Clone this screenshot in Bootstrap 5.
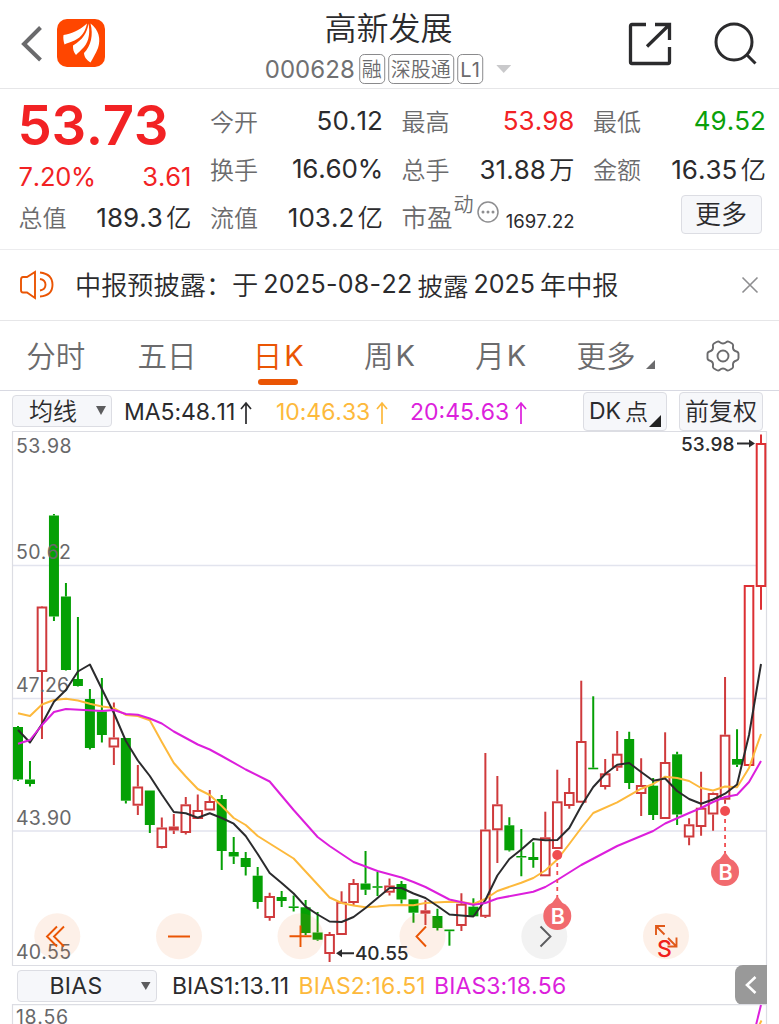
<!DOCTYPE html>
<html lang="zh-CN">
<head>
<meta charset="utf-8">
<meta name="viewport" content="width=device-width, initial-scale=1">
<title>高新发展 000628</title>
<link href="https://cdn.jsdelivr.net/npm/bootstrap@5.3.0/dist/css/bootstrap.min.css" rel="stylesheet">
<style>
body{font-family:Inter,"Noto Sans CJK SC",sans-serif;font-weight:400;color:#2b2b2d;background:#fff;overflow:hidden;line-height:1;height:1024px;font-kerning:none}
body *{white-space:nowrap}
.zh{font-family:"Noto Sans CJK SC",sans-serif;font-weight:350}
svg{display:block;flex:none}
.topbar{height:89px;border-bottom:1px solid #e6e6e8;padding:0 22px 0 20px}
.stock-name{font-size:32px;line-height:36px;font-weight:350}
.stock-code{font-size:24px;letter-spacing:.05px;color:#707072;margin-right:1px;padding-top:1px}
.tag{height:30px;border:1px solid #8a8a8c;border-radius:5px;font-size:20px;line-height:27px;color:#6b6b6d;padding:0 2px}
.quote{height:161px;border-bottom:1px solid #ececee;display:grid;grid-template-columns:173px 173px 173px 173px;column-gap:18.5px;padding:8px 0 0 18.5px}
.cell{height:48px;font-size:26px}
.cell .zh{font-size:24px;color:#6b6b6d}
.cell b{font-weight:400;letter-spacing:.05px}
.cell b .zh{color:#2b2b2d;font-size:25.5px;margin-left:3px}
.rise{color:#f22224}.fall{color:#0aa00a}
.last-price{font-size:54.5px;font-weight:600;height:56px;line-height:56px;letter-spacing:-.4px;margin-left:-1px}
.pill{background:#f6f7fa;border:1px solid #dcdde3;border-radius:4px}
.notice{height:71px;border-bottom:1px solid #e6e6e8;font-size:25px;padding:0 20px 0 20px}
.notice .zh{font-size:26.2px;margin-top:-1px}
.tabs{height:70px;border-bottom:1px solid #d8d9e2;font-size:29px;color:#6b6b6d}
.tabs .zh{font-size:29.5px;margin-top:-2px}
.tabs>div{width:14.2857%;position:relative}
.tabs .on{color:#ea5504}
.tabs .on::after{content:"";position:absolute;left:calc(50% - 20px);bottom:5px;width:40px;height:6px;border-radius:3px;background:#ea5504}
.tools{height:40px;padding:0 16px 0 12px;font-size:23px}
.tools>span{padding-top:3px}
.ma10{color:#fdb93c}.ma20{color:#dc1fdc}
.bias{height:39px;padding-left:16.5px;font-size:23px}
.bias>span{padding-top:3px}
.drawer-handle{width:32px;height:40px;border-radius:8px 0 0 8px;background:#999;margin:0 12px 0 auto}
.axis{font-size:19.5px;fill:#68686a}
</style>
</head>
<body>
<header class="topbar d-flex justify-content-between position-relative">
  <div class="d-flex align-items-start">
    <svg width="24" height="40" viewBox="0 0 24 40" style="margin-top:24px"><path d="M20.5 3.500L4 20L20.500 36" fill="none" stroke="#6a6a6c" stroke-width="4"/></svg>
    <svg width="48" height="48" viewBox="0 0 48 48" style="margin:19px 0 0 12.500px"><rect width="48" height="48" rx="10" fill="#ff4600"/><path d="M6.500 16C14 14.500 22 12 30 4.500C28.500 12 25 18 17.500 21.500C13 23.300 10 24.300 7.500 25.500C6.500 22 6 19 6.500 16ZM31.500 4.500C33 12 32.500 22 27 28C24 31 21 34 19 36C16.500 33 15.800 30 16 26.500C26 20.500 30 14 31.500 4.500ZM33.500 4.500C42 11 44 20 41 29C38.500 35 36 39 33.500 43.500C29.500 41 27 37.500 27 34C34 27 36.500 16 33.500 4.500Z" fill="#fff"/></svg>
  </div>
  <div class="position-absolute start-50 translate-middle-x d-flex flex-column align-items-center" style="top:8px">
    <div class="zh stock-name" style="margin-left:-2px">高新发展</div>
    <div class="d-flex align-items-center" style="margin-top:10px;gap:3px;height:30px;padding-right:3px">
      <span class="stock-code">000628</span><span class="tag zh">融</span><span class="tag zh">深股通</span><span class="tag" style="padding:2px 2.500px 0">L1</span>
      <svg width="15" height="8" style="margin-left:10px" viewBox="0 0 15 8"><path d="M0 0H15L7.500 8Z" fill="#c9c9cb"/></svg>
    </div>
  </div>
  <div class="d-flex" style="padding-top:22px;gap:42px">
    <svg width="44" height="44" viewBox="0 0 44 44" fill="none" stroke="#2b2b2d" stroke-width="3.300"><path d="M18 2.500H4Q2.500 2.500 2.500 4V40Q2.500 41.500 4 41.500H40Q41.500 41.500 41.500 40V25M27 2.500H41.500V18M41 3L19 24.500"/></svg>
    <svg width="43" height="43" viewBox="0 0 43 43" fill="none" stroke="#2b2b2d" stroke-width="3"><circle cx="20" cy="20" r="18"/><path d="M33 33L41.500 41.500"/></svg>
  </div>
</header>

<section class="quote">
  <div>
    <div class="last-price rise">53.73</div>
    <div class="d-flex justify-content-between align-items-center rise" style="height:48px;font-size:25.500px"><span style="letter-spacing:-.2px">7.20%</span><span>3.61</span></div>
    <div class="cell d-flex justify-content-between align-items-center" style="margin-top:-8px"><span class="zh">总值</span><b>189.3<span class="zh">亿</span></b></div>
  </div>
  <div>
    <div class="cell d-flex justify-content-between align-items-center"><span class="zh">今开</span><b>50.12</b></div>
    <div class="cell d-flex justify-content-between align-items-center"><span class="zh">换手</span><b style="letter-spacing:-.2px">16.60%</b></div>
    <div class="cell d-flex justify-content-between align-items-center"><span class="zh">流值</span><b>103.2<span class="zh">亿</span></b></div>
  </div>
  <div>
    <div class="cell d-flex justify-content-between align-items-center"><span class="zh">最高</span><b class="rise">53.98</b></div>
    <div class="cell d-flex justify-content-between align-items-center"><span class="zh">总手</span><b>31.88<span class="zh">万</span></b></div>
    <div class="cell d-flex align-items-center"><span class="zh" style="font-size:25.500px;margin-top:-2px">市盈</span><span class="zh" style="font-size:20px;margin:-26px 3px 0 1px">动</span>
      <svg width="22" height="22" viewBox="0 0 22 22" style="margin-top:-10px"><circle cx="11" cy="11" r="10" fill="none" stroke="#8e8e90" stroke-width="1.500"/><g fill="#8e8e90"><circle cx="6" cy="11" r="1.500"/><circle cx="11" cy="11" r="1.500"/><circle cx="16" cy="11" r="1.500"/></g></svg>
      <span class="ms-auto" style="font-size:18.500px;padding-top:8px">1697.22</span></div>
  </div>
  <div>
    <div class="cell d-flex justify-content-between align-items-center"><span class="zh">最低</span><b class="fall">49.52</b></div>
    <div class="cell d-flex justify-content-between align-items-center"><span class="zh">金额</span><b>16.35<span class="zh">亿</span></b></div>
    <div class="d-flex justify-content-end" style="padding:2px 4.500px 0 0"><div class="pill zh d-flex align-items-center justify-content-center" style="width:81px;height:39px;font-size:26px;padding-bottom:3px">更多</div></div>
  </div>
</section>

<section class="notice d-flex align-items-center">
  <svg width="34" height="30" viewBox="0 0 34 30" fill="none" stroke="#ea5504" stroke-width="1.900"><path d="M15 2V28L7 22.500H3Q1 22.500 1 20V10Q1 7 3 7H7ZM20 9Q25.500 10 25.500 14.700T20 20.500M20 2.500Q32.500 4 32.500 14.700T20 26.500"/></svg>
  <div class="d-flex align-items-center" style="margin-left:21px;gap:5px"><span class="zh">中报预披露：于</span><span style="letter-spacing:.3px">2025-08-22</span><span class="zh" style="font-size:25.500px">披露</span><span>2025</span><span class="zh">年中报</span></div>
  <svg class="ms-auto" width="18" height="18" viewBox="0 0 18 18"><path d="M1.500 1.500L16.500 16.500M16.500 1.500L1.500 16.500" stroke="#8e8e90" stroke-width="1.600"/></svg>
</section>

<nav class="tabs d-flex text-center">
  <div class="d-flex align-items-center justify-content-center"><span class="zh">分时</span></div>
  <div class="d-flex align-items-center justify-content-center"><span class="zh">五日</span></div>
  <div class="on d-flex align-items-center justify-content-center"><span class="zh">日</span><span style="margin-left:2px">K</span></div>
  <div class="d-flex align-items-center justify-content-center"><span class="zh">周</span><span style="margin-left:2px">K</span></div>
  <div class="d-flex align-items-center justify-content-center"><span class="zh">月</span><span style="margin-left:2px">K</span></div>
  <div class="d-flex align-items-center justify-content-center" style="padding-left:7px"><span class="zh">更多</span><svg width="9" height="9" style="margin:18px 0 0 10px"><path d="M9 0V9H0Z" fill="#6b6b6d"/></svg></div>
  <div class="d-flex align-items-center justify-content-center"><svg width="34" height="32" viewBox="0 0 34 32" fill="none" stroke="#6b6b6d" stroke-width="1.900"><path d="M10.500 2Q12.500 1 13.500 2Q17 5 20.500 2Q21.500 1 23.500 2L26 3.500Q27.500 4.500 27 6.500Q26.500 10.500 30.500 11.500Q32.500 12 32.500 14V18Q32.500 20 30.500 20.500Q26.500 21.500 27 25.500Q27.500 27.500 26 28.500L23.500 30Q21.500 31 20.500 30Q17 27 13.500 30Q12.500 31 10.500 30L8 28.500Q6.500 27.500 7 25.500Q7.500 21.500 3.500 20.500Q1.500 20 1.500 18V14Q1.500 12 3.500 11.500Q7.500 10.500 7 6.500Q6.500 4.500 8 3.500Z"/><circle cx="17" cy="16" r="5.500"/></svg></div>
</nav>

<div class="tools d-flex align-items-center">
  <div class="pill zh d-flex align-items-center justify-content-between" style="width:100px;height:32px;font-size:24px;padding:0 5px 2px 16px">均线<svg width="10" height="9"><path d="M0 0H10L5 9Z" fill="#5c5c5e"/></svg></div>
  <span class="ma5 d-flex" style="margin-left:12px;width:152px;letter-spacing:-.05px">MA5:48.11<svg width="12" height="24" viewBox="0 0 12 24" style="margin-left:5px" fill="none" stroke="currentColor" stroke-width="1.700"><path d="M6 23V2M1 8L6 2L11 8"/></svg></span>
  <span class="ma10 d-flex" style="width:134px;letter-spacing:-.05px">10:46.33<svg width="12" height="24" viewBox="0 0 12 24" style="margin-left:6px" fill="none" stroke="currentColor" stroke-width="1.700"><path d="M6 23V2M1 8L6 2L11 8"/></svg></span>
  <span class="ma20 d-flex">20:45.63<svg width="12" height="24" viewBox="0 0 12 24" style="margin-left:6px" fill="none" stroke="currentColor" stroke-width="1.700"><path d="M6 23V2M1 8L6 2L11 8"/></svg></span>
  <div class="pill d-flex align-items-center ms-auto position-relative" style="width:84px;height:39px;padding-left:5px">DK<span class="zh" style="margin:-2px 0 0 4px;font-size:23px">点</span><svg class="position-absolute bottom-0 end-0" width="12" height="12" style="margin:0 5px 3px 0"><path d="M12 0V12H0Z" fill="#222"/></svg></div>
  <div class="pill zh d-flex align-items-center justify-content-center" style="width:84px;height:39px;margin-left:12px;font-size:24px;padding-bottom:2px">前复权</div>
</div>

<!-- daily candles with moving averages -->
<svg id="kline" width="779" height="534" viewBox="0 431 779 534" overflow="visible">
  <g stroke="#e2e4ee" stroke-width="1.400" fill="none"><path d="M12.500 565.500H766.500M12.500 698.500H766.500M12.500 831H766.500"/><path d="M12.500 431.500H766.500V965.500H12.500Z" stroke="#dcdde3" stroke-width="1.200"/></g>
  <g id="candles" stroke-width="2"></g>
  <g class="axis">
    <text x="16" y="452.700" textLength="55.500">53.98</text><text x="16" y="558.700" textLength="55">50.62</text><text x="16" y="691.700" textLength="53">47.26</text><text x="16" y="825" textLength="55.500">43.90</text><text x="16" y="958.700" textLength="55">40.55</text>
  </g>
  <g id="averages" fill="none" stroke-width="2" stroke-linejoin="round"></g>
  <g font-size="19" font-weight="500" fill="#2b2b2d"><text x="681" y="450.800" textLength="53.500">53.98</text><text x="355" y="960.300" textLength="53.500">40.55</text></g>
  <g stroke="#2b2b2d" fill="#2b2b2d" stroke-width="1.900"><path d="M737 443.500H750M354 953.300H341"/><path d="M755 443.500L749 439.500V447.500ZM336 953.300L342 949.300V957.300Z" stroke="none"/></g>
  <g id="controls" fill="none" stroke="#ea5504" stroke-width="1.900">
    <g stroke="none" fill="#ea6e1e" fill-opacity=".1"><circle cx="57.300" cy="936.300" r="23"/><circle cx="179" cy="936.300" r="23"/><circle cx="300.500" cy="936.300" r="23"/><circle cx="422.500" cy="936.300" r="23"/><circle cx="666" cy="936.300" r="23"/><circle cx="544.300" cy="936.300" r="23" fill="#000" fill-opacity=".05"/></g>
    <path d="M57 926.500L47 936.500L57 946.500M64 926.500L54 936.500L64 946.500M168 936.500H190M289.500 936.300H311.500M300.500 925.500V947M426 926.500L416.500 936.500L426 946.500"/>
    <path d="M540.500 926.500L550.500 936.500L540.500 946.500" stroke="#5c5c5e"/>
    <path d="M656 935V926H665M656 926L664.500 934.500M676.500 937.500V946.500H667.500M676.500 946.500L668 938" stroke="#e0591a"/>
  </g>
  <text x="657" y="956.500" font-size="23" font-weight="500" fill="#f0201c">S</text>
  <g id="marks"></g>
</svg>

<div class="bias d-flex align-items-center">
  <div class="pill d-flex align-items-center justify-content-between" style="width:140px;height:32px;padding:1px 5px 0 32px;letter-spacing:.3px;margin-top:2px">BIAS<svg width="10" height="8"><path d="M0 0H9.500L4.800 8Z" fill="#5c5c5e"/></svg></div>
  <span style="margin-left:15.500px;width:126.500px;letter-spacing:.05px">BIAS1:13.11</span><span class="ma10" style="width:135.500px;letter-spacing:.1px">BIAS2:16.51</span><span class="ma20" style="letter-spacing:.1px">BIAS3:18.56</span>
  <div class="drawer-handle d-flex align-items-center justify-content-center"><svg width="12" height="20" viewBox="0 0 12 20"><path d="M10.500 2L2 10L10.500 18" fill="none" stroke="#fff" stroke-width="2.600"/></svg></div>
</div>
<svg width="779" height="20" viewBox="0 1004 779 20">
  <path d="M12.500 1024V1004.700H766.500V1024" fill="none" stroke="#dcdde3" stroke-width="1.200"/>
  <text class="axis" x="16" y="1023.500" textLength="52">18.56</text>
  <path d="M756 1025L761 1005" stroke="#dc1fdc" stroke-width="2"/><path d="M759.500 1024.500L761.500 1020.500" stroke="#fdb93c" stroke-width="2"/>
</svg>

<script>
// kind, high, body top, body bottom, low (chart units), one row per trading day
const days = [
['g',726,727,779.5,781],['g',761,779.5,784,786.5],['r',606,606.5,672,739],['g',514,515.5,616.5,621],['g',583,596.5,670,670.5],['g',617,679,686,686.5],['g',689,699,748,749.5],['g',678,711.5,735,742.5],['r',702.5,737.5,747.5,765],['g',738,738,800.7,803.5],
['r',765,786.5,805.7,815],['g',790.5,790.5,825,833],['r',817.5,827.5,848,848.5],['r',814,826.5,830.5,834],['r',797,804.3,833,834.5],['r',794.5,810,819,819],['r',790,801,810.5,810.5],['g',795,799,851,870],['g',837,852,856.5,864],['g',852,858,867,875.5],
['g',867,875.7,902,908.7],['r',892.7,896,918,920.7],['g',891,897,901,907],['g',895.5,906.4,908,911.5],['g',900,907.3,933,935],['g',912,932.5,939.7,940.7],['r',932,934,954,962],['r',891.3,901.7,935,935],['r',879,883,903,906],['g',851,883.5,889.7,895],
['g',872,886.2,887.8,896],['r',878.5,885.5,892.7,895.5],['g',881,884,899.5,903.5],['g',899.3,899.3,912.7,922.7],['r',900.3,910.3,913.7,925],['g',908.7,916,928,930.5],['g',929.5,929.5,931.2,945.7],['r',893.3,903.7,926,931],['g',898.3,906.7,916.3,916.3],['r',753,829.5,916.8,918],
['r',776,804.3,830.3,863],['g',817.3,825.3,850.3,851.5],['g',829,856,857.5,876.3],['g',842.3,857,860,867.7],['r',811.7,837.3,876.3,876.3],['r',769.7,801.3,849,849],['r',778,792,806,808.7],['r',680.7,741,802.7,802.7],['g',696.3,767.7,769.3,769.3],['r',759,773.3,787,789.5],
['r',731,753.7,767.7,771],['g',731.7,739,783,789],['r',758.3,785,794,816],['g',778,785.7,815,820],['r',732.3,762,819,819],['g',751.7,754.3,814.5,825],['r',818.3,824.3,837.5,845.3],['r',771.7,807.7,827,835.7],['r',792.5,793,814.5,830.7],['r',677,734.7,799.7,803.7],
['g',729.3,759,764.7,767],['r',585,585,766,766],['r',434.5,443,587,609.7]];
const x = i => 18 + i * 11.984;
let out = '';
days.forEach(([k, hi, top, bot, lo], i) => {
  const c = k === 'g' ? '#05a005' : (i > 60 ? '#dc3034' : '#cf3a3c'), cx = x(i);
  out += `<path d="M${cx} ${hi}V${top}M${cx} ${bot}V${lo}" stroke="${c}"/>`;
  out += k === 'g' || bot - top < 5
    ? `<rect x="${cx - 5}" y="${top}" width="10" height="${bot - top}" fill="${c}" stroke="none"/>`
    : `<rect x="${cx - 4.3}" y="${top + 1}" width="8.6" height="${bot - top - 2}" fill="#fff" stroke="${c}"/>`;
});
document.getElementById('candles').innerHTML = out;
const lines = [
['#fdb93c',[[0,713.3],[1,716],[2,704.5],[3,700],[4,698.7],[5,700.5],[6,703.7],[7,706.5],[8,708],[9,715],[10,716],[11,720.3],[12,742],[13,763],[14,776.5],[15,789],[16,795],[17,806],[18,818],[19,825],[20,836],[23,858.5],[26,897.5],[27,903],[28,905.5],[29,907.3],[30,906.5],[31,905.2],[32,905],[33,905.2],[34,903],[36,901.7],[37,902],[38,904],[39,899],[40,891],[42,882.7],[43,878],[44,870.5],[45,859.5],[46,844],[47,828],[48,813],[50,802.3],[52,788.7],[53,784],[54,776.7],[55,778],[56,781],[57,788],[58,790.5],[59,786.5],[60,787.3],[61,768],[62,734]]],
['#2b2b2d',[[0,730],[1,742.5],[2,724],[3,701.7],[4,690],[5,671.5],[6,664.5],[7,689],[8,713],[9,741],[10,760.5],[11,776],[12,794.5],[13,812],[14,813.3],[15,817.7],[16,813.3],[17,818],[18,823.7],[19,836],[20,854],[21,873],[22,883],[23,893.5],[24,906.7],[25,914.5],[26,921.5],[27,922],[28,917],[29,908],[30,898],[31,888],[32,888],[33,893.5],[34,898],[35,906],[36,914.5],[37,915.5],[38,916.5],[39,900],[40,875.5],[41,859],[42,849.5],[43,839],[44,840.3],[45,840],[46,828],[47,806],[48,787],[49,774],[50,764.7],[51,763],[52,772],[53,780.7],[54,778.5],[55,791],[56,799],[57,803.7],[58,799.5],[59,793.7],[60,784.5],[61,735],[62,664]]],
['#dc1fdc',[[0,743.7],[1,740],[2,725],[3,712],[4,709],[7,711],[8,710],[9,714],[10,714.7],[11,718.5],[12,723.5],[13,731.5],[14,738],[15,744.5],[16,749.5],[17,756],[19,769.5],[21,781.5],[23,810],[25,837],[26,846],[27,854],[28,862],[30,871],[32,877.5],[33,882],[34,887],[36,899.5],[38,904.7],[39,903],[40,898.5],[43,891.7],[44,887],[45,880],[47,865],[50,846],[53,831],[54,823.5],[56,813],[57,808],[58,802],[59,797],[60,794.7],[61,782],[62,761]]]];
document.getElementById('averages').innerHTML = lines.map(([c, p]) =>
  `<polyline stroke="${c}" points="${p.map(q => x(q[0]) + ',' + q[1]).join(' ')}"/>`).join('');
// buy marks: dot on the day's low, dashed leader, drop-shaped badge
document.getElementById('marks').innerHTML = [[45,855,916],[59,811,872]].map(([i, y, b]) => {
  const cx = x(i);
  return `<circle cx="${cx}" cy="${y}" r="5" fill="#f04c50"/><path d="M${cx} ${y + 8}V${b - 18}" stroke="#f04c50" stroke-width="1.800" stroke-dasharray="4 4"/>
  <circle cx="${cx}" cy="${b}" r="14" fill="#f16a6e"/><path d="M${cx} ${b - 20}L${cx - 6} ${b - 12}H${cx + 6}Z" fill="#f16a6e"/>
  <text x="${cx + .5}" y="${b + 7.500}" font-size="21.500" font-weight="600" text-anchor="middle" fill="#fff">B</text>`;
}).join('');
</script>
<script src="https://cdn.jsdelivr.net/npm/bootstrap@5.3.0/dist/js/bootstrap.bundle.min.js"></script>
</body>
</html>
